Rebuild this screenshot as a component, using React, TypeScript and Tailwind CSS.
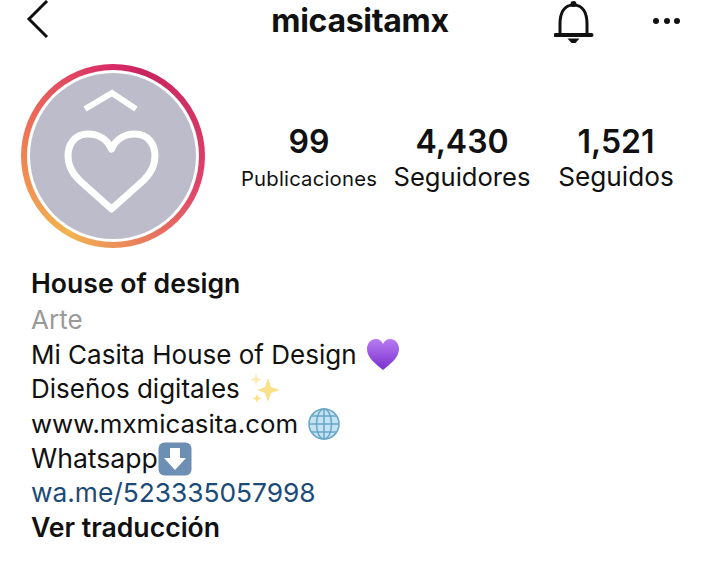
const STATS = [
  { value: "99", label: "Publicaciones", labelClass: "text-[20.3px] tracking-[0.2px] mt-[1px]", cellClass: "w-[136px]" },
  { value: "4,430", label: "Seguidores", labelClass: "text-[25.6px] mt-[-1px]", cellClass: "w-[138px] ml-[16px]" },
  { value: "1,521", label: "Seguidos", labelClass: "text-[26.2px] mt-[-1px]", cellClass: "w-[116px] ml-[27px]" },
];

function Heart() {
  return (
    <svg width="166" height="166" viewBox="0 0 166 166" className="block">
      <circle cx="83" cy="83" r="83" fill="#bcbccb" />
      <path d="M55 36 L82 20 L106 36" fill="none" stroke="#fff" strokeWidth="6" />
      <path
        d="M81.5 136 L49 107 C42 100 38 92 38 83 C38 70 46 61 58 61 C68 61 77 66 81.5 76 C86 66 95 61 105 61 C117 61 125 70 125 83 C125 92 121 100 114 107 Z"
        fill="none"
        stroke="#fff"
        strokeWidth="7"
        strokeLinejoin="round"
      />
    </svg>
  );
}

function PurpleHeart() {
  return (
    <svg width="34" height="34" viewBox="0 0 34 34" className="ml-[9px] shrink-0">
      <defs>
        <linearGradient id="purple" x1="0" y1="0" x2="0" y2="1">
          <stop offset="0%" stopColor="#b77cf0" />
          <stop offset="100%" stopColor="#7a2fd0" />
        </linearGradient>
      </defs>
      <path d="M17 32 C10 26 1 20 1 11 C1 5 5 1 10 1 C13 1 16 3 17 6 C18 3 21 1 24 1 C29 1 33 5 33 11 C33 20 24 26 17 32 Z" fill="url(#purple)" />
    </svg>
  );
}

function Sparkles() {
  return (
    <svg width="34" height="32" viewBox="0 0 34 32" className="ml-[9px] shrink-0">
      <path d="M19 5 L22 14 L31 17 L22 20 L19 29 L16 20 L8 17 L16 14 Z" fill="#fbe08a" />
      <path d="M7 0 L8.5 5 L13 6.5 L8.5 8 L7 13 L5.5 8 L1 6.5 L5.5 5 Z" fill="#fcebb4" />
      <path d="M8 21 L9.2 24.3 L12.5 25.5 L9.2 26.7 L8 30 L6.8 26.7 L3.5 25.5 L6.8 24.3 Z" fill="#fbe08a" />
    </svg>
  );
}

function Globe() {
  return (
    <svg width="34" height="32" viewBox="0 0 34 32" className="ml-[9px] shrink-0">
      <circle cx="17" cy="16" r="15.5" fill="#c4e3f2" />
      <g fill="none" stroke="#6aa6c8" strokeWidth="1.5">
        <circle cx="17" cy="16" r="15" />
        <ellipse cx="17" cy="16" rx="7.5" ry="15" />
        <path d="M17 1 V31 M2 16 H32 M4.5 8 H29.5 M4.5 24 H29.5" />
      </g>
    </svg>
  );
}

function DownArrow() {
  return (
    <svg width="34" height="34" viewBox="0 0 34 34" className="shrink-0">
      <rect x="0.5" y="0.5" width="33" height="33" rx="6" fill="#6d8fb4" />
      <path d="M12 6 H22 V16 H28 L17 28 L6 16 H12 Z" fill="#fff" />
    </svg>
  );
}

export default function App() {
  return (
    <div className="w-[720px] h-[567px] overflow-hidden bg-white text-[#111] font-['Inter','Liberation_Sans',sans-serif]">
      {/* Top bar */}
      <header className="relative h-[44px] flex items-center justify-center">
        <svg width="24" height="40" viewBox="0 0 24 40" className="absolute left-[26px] top-0">
          <path d="M21 1 L3 19 L21 37" fill="none" stroke="#111" strokeWidth="3" />
        </svg>
        <span className="text-[32px] font-bold tracking-[-0.3px] leading-none mt-[-3px]">micasitamx</span>
        <svg width="40" height="44" viewBox="0 0 40 44" className="absolute left-[554px] top-0">
          <path
            d="M6 34 V24 C6 13 10 5 19.5 5 C29 5 33 13 33 24 V34"
            fill="none"
            stroke="#111"
            strokeWidth="3"
          />
          <path d="M1.5 35 H37.5" stroke="#111" strokeWidth="4" strokeLinecap="round" />
          <circle cx="19.5" cy="4" r="3" fill="#111" />
          <path d="M13.5 38.5 H25.5 L21.5 43 H17.5 Z" fill="#111" />
        </svg>
        <div className="absolute left-[653px] top-[18px] flex gap-[4.5px]">
          <span className="size-[6px] rounded-full bg-[#111]" />
          <span className="size-[6px] rounded-full bg-[#111]" />
          <span className="size-[6px] rounded-full bg-[#111]" />
        </div>
      </header>

      {/* Avatar and stats */}
      <section className="mt-[20px] pl-[21px] flex items-start">
        <div className="size-[184px] shrink-0 rounded-full p-[6px] bg-[conic-gradient(from_20deg,#c9245f,#e0446a_90deg,#f2b450_190deg,#ef7a55_260deg,#d92a68_340deg,#c9245f)]">
          <div className="size-full rounded-full bg-white flex items-center justify-center">
            <Heart />
          </div>
        </div>
        <div className="flex ml-[36px] mt-[58px]">
          {STATS.map((s) => (
            <div key={s.label} className={`flex flex-col items-center ${s.cellClass}`}>
              <span className="text-[32px] font-semibold leading-[40px]">{s.value}</span>
              <span className={`${s.labelClass} leading-[31px] whitespace-nowrap`}>{s.label}</span>
            </div>
          ))}
        </div>
      </section>

      {/* Bio */}
      <section className="mt-[19px] pl-[31px] text-[26px] leading-[34.6px]">
        <div className="font-semibold text-[26.6px] leading-[33px] mb-[3px]">House of design</div>
        <div className="text-[#9a9a9a]">Arte</div>
        <div className="flex items-center">Mi Casita House of Design<PurpleHeart /></div>
        <div className="flex items-center">Diseños digitales<Sparkles /></div>
        <div className="flex items-center text-[25.8px]">www.mxmicasita.com<Globe /></div>
        <div className="flex items-center text-[26.6px]">Whatsapp<DownArrow /></div>
        <div className="text-[#1c4a78] text-[26.3px]">wa.me/523335057998</div>
        <div className="font-semibold text-[26.6px] mt-[-1px]">Ver traducción</div>
      </section>
    </div>
  );
}
